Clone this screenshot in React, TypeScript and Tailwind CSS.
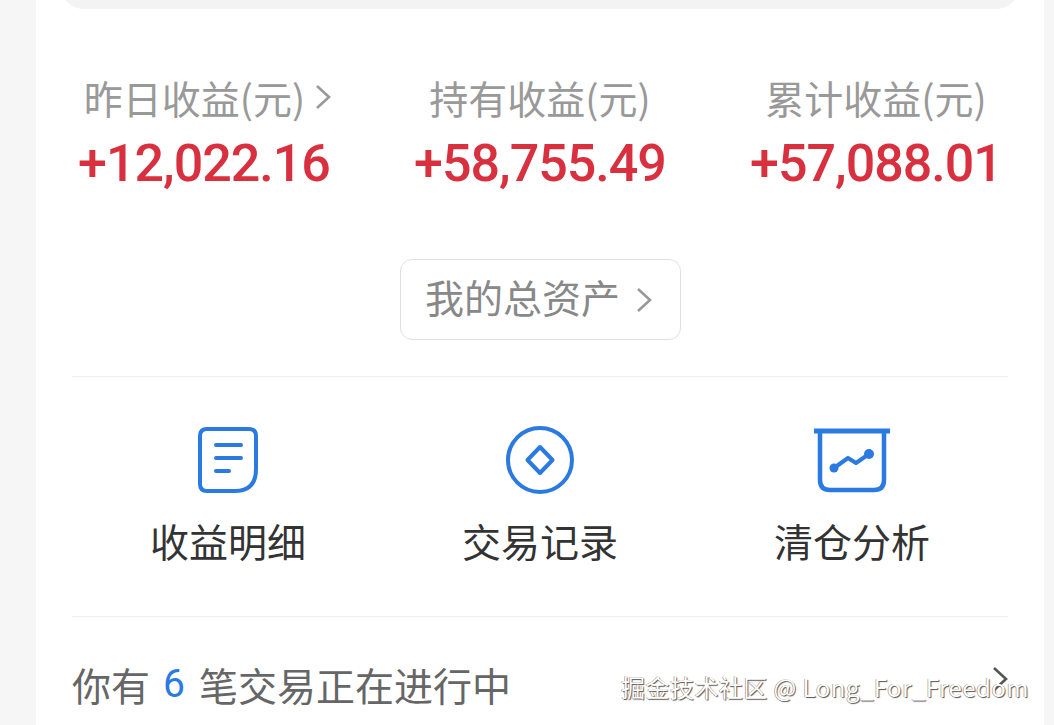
import type { ReactNode } from 'react'

const cjk = { fontFamily: '"Noto Sans CJK SC", sans-serif' }

function Chevron({ className }: { className: string }) {
  return (
    <svg viewBox="0 0 16 26" fill="none" className={className}>
      <path d="M2 2 L14 13 L2 24" stroke="currentColor" strokeWidth="2.6" />
    </svg>
  )
}

function Stat({ label, value, arrow }: { label: string; value: string; arrow?: boolean }) {
  return (
    <div className="flex flex-col items-center">
      <div className={`flex h-[56px] items-center text-[39px] leading-[56px] text-[#999999] ${arrow ? 'ml-[7px]' : ''}`}>
        <span>{label}</span>
        {arrow && <Chevron className="ml-[10px] h-[26px] w-[16px] text-[#999999]" />}
      </div>
      <div
        className="mt-[11px] h-[56px] text-[52px] leading-[56px] font-medium tracking-[-1px] text-[#d8303f]"
        style={{ fontFamily: 'Roboto, sans-serif' }}
      >
        {value}
      </div>
    </div>
  )
}

function Action({ icon, label }: { icon: ReactNode; label: string }) {
  return (
    <div className="flex flex-col items-center">
      <div className="flex h-[70px] items-center justify-center">{icon}</div>
      <div className="mt-[17px] h-[56px] text-[39px] leading-[56px] text-[#333333]">{label}</div>
    </div>
  )
}

const NoteIcon = (
  <svg width="60" height="66" viewBox="0 0 60 66" fill="none" stroke="#2a7ae2" strokeWidth="4">
    <path d="M9 2 H51 Q58 2 58 9 V42 Q58 64 37 64 H9 Q2 64 2 57 V9 Q2 2 9 2 Z" />
    <path d="M18 18 H43 M18 31 H43 M18 44 H31" strokeLinecap="round" />
  </svg>
)

const CoinIcon = (
  <svg width="68" height="68" viewBox="0 0 68 68" fill="none" stroke="#2a7ae2" strokeWidth="4">
    <circle cx="34" cy="34" r="32" />
    <path d="M34 21 L46.5 34 L34 47 L21.5 34 Z" strokeLinejoin="round" />
  </svg>
)

const ChartIcon = (
  <svg width="76" height="65" viewBox="0 0 76 65" fill="none" stroke="#2a7ae2">
    <path d="M0 3 H76" strokeWidth="5" />
    <path d="M6 3 V52 Q6 62 16 62 H60 Q70 62 70 52 V3" strokeWidth="4.5" />
    <path d="M20 40 L34 30 L42 35 L55 26" strokeWidth="4" strokeLinecap="round" strokeLinejoin="round" />
    <circle cx="20" cy="40" r="4.5" fill="#2a7ae2" stroke="none" />
    <circle cx="55" cy="26" r="5" fill="#2a7ae2" stroke="none" />
  </svg>
)

export default function App() {
  return (
    <div className="relative h-[725px] w-[1054px] overflow-hidden bg-[#f6f6f6]" style={cjk}>
      <div className="ml-[36px] h-[740px] w-[1008px] bg-white px-[36px]">
        {/* top card edge */}
        <div className="mx-[-12px] mt-[-15px] h-[24px] rounded-b-[24px] bg-[#f3f3f3]" />

        <div className="mx-[-36px] grid grid-cols-3 pt-[60px]">
          <Stat label="昨日收益(元)" value="+12,022.16" arrow />
          <Stat label="持有收益(元)" value="+58,755.49" />
          <Stat label="累计收益(元)" value="+57,088.01" />
        </div>

        <div className="mt-[67px] flex justify-center">
          <div className="flex h-[81px] w-[281px] items-center justify-center rounded-[12px] border border-[#e0e0e0] pr-[3px] pb-[6px] text-[39px] text-[#888888]">
            <span>我的总资产</span>
            <Chevron className="mt-[6px] ml-[16px] h-[26px] w-[16px] text-[#999999]" />
          </div>
        </div>

        <div className="mt-[36px] border-t border-[#f0f0f0]" />

        <div className="grid grid-cols-3 pt-[48px]">
          <Action icon={NoteIcon} label="收益明细" />
          <Action icon={CoinIcon} label="交易记录" />
          <Action icon={ChartIcon} label="清仓分析" />
        </div>

        <div className="mt-[48px] border-t border-[#f0f0f0]" />

        <div className="flex items-center justify-between pt-[39px] text-[39px] leading-[56px] text-[#666666]">
          <div className="flex items-center">
            <span>你有</span>
            <span className="mr-[14px] ml-[13px] text-[#2a7ae2]" style={{ fontFamily: 'Roboto, sans-serif' }}>6</span>
            <span>笔交易正在进行中</span>
          </div>
          <Chevron className="mb-[10px] h-[28px] w-[16px] text-[#555555]" />
        </div>
      </div>

      {/* watermark */}
      <div className="absolute top-[669px] left-[621px] text-[24px] leading-[36px] tracking-[0.46px] whitespace-nowrap text-white [text-shadow:1px_1px_1px_#555555,-0.5px_-0.5px_0.5px_#777777]">
        掘金技术社区 @ Long_For_Freedom
      </div>
    </div>
  )
}
